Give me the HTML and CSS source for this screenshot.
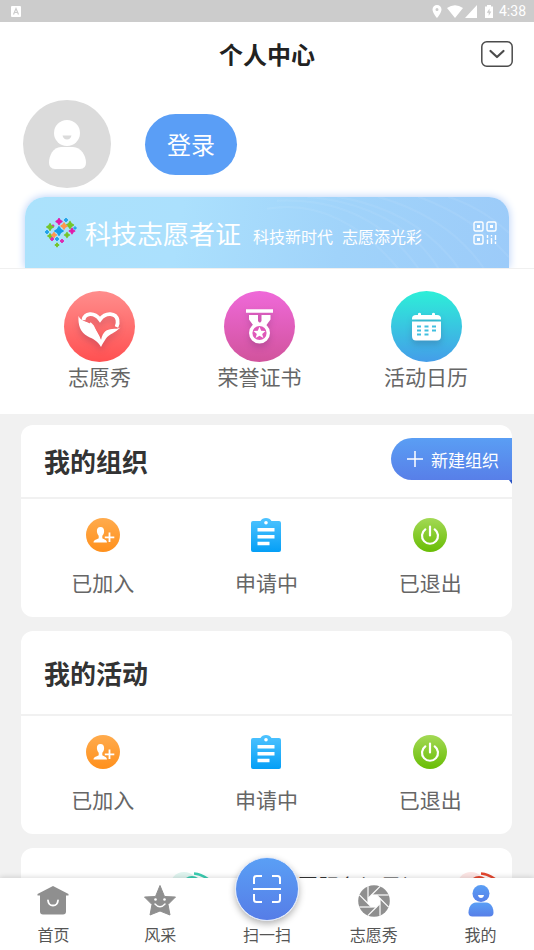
FILE: index.html
```html
<!DOCTYPE html>
<html lang="zh-CN">
<head>
<meta charset="utf-8">
<meta name="viewport" content="width=device-width, initial-scale=1">
<title>个人中心</title>
<link rel="stylesheet" href="styles.css">
</head>
<body>
<svg class="defs" aria-hidden="true">
  <defs>
    <linearGradient id="gOrange" x1="0" y1="0" x2="0" y2="1"><stop offset="0" stop-color="#ffab4d"/><stop offset="1" stop-color="#ff901c"/></linearGradient>
    <linearGradient id="gBlue" x1="0" y1="0" x2="0" y2="1"><stop offset="0" stop-color="#4fc3ff"/><stop offset="1" stop-color="#059ff6"/></linearGradient>
    <linearGradient id="gGreen" x1="0" y1="0" x2="0" y2="1"><stop offset="0" stop-color="#a3d955"/><stop offset="1" stop-color="#69bd05"/></linearGradient>
    <linearGradient id="gUser" x1="0" y1="0" x2="0" y2="1"><stop offset="0" stop-color="#5a9ff5"/><stop offset="1" stop-color="#577fe8"/></linearGradient>
    <path id="spark" d="M0-4Q.8-1.2 4 0Q.8 1.2 0 4Q-.8 1.2-4 0Q-.8-1.2 0-4Z" stroke-width="1.800" stroke-linejoin="round"/>
    <path id="blade" d="M-2.500-6H14.700" stroke="#fff" stroke-width="1.200"/>
  </defs>
  <symbol id="joined" viewBox="0 0 34 34">
    <circle cx="17" cy="17" r="17" fill="url(#gOrange)"/>
    <path d="M14.500 9C11.800 9 10.800 10.800 10.900 13.200C11 15.500 12 17 12.700 17.800V20.300C10.800 21.500 7.700 21.800 7.500 24.500H21C20.800 21.800 18.200 21.500 16.300 20.300V17.800C17.200 17 18.100 15.500 18.100 13.200C18.100 10.800 17.200 9 14.500 9Z" fill="#fff"/>
    <path d="M23.500 15V24M19 19.500H28" stroke="#fd9c36" stroke-width="4"/>
    <path d="M23.500 14.500V24M18.800 19.300H28.300" stroke="#fff" stroke-width="1.800"/>
  </symbol>
  <symbol id="pending" viewBox="0 0 34 34">
    <path d="M4 3H11.500C12.500 1 14.500 0 17 0S21.500 1 22.500 3H30Q32 3 32 5V32Q32 34 30 34H4Q2 34 2 32V5Q2 3 4 3Z" fill="url(#gBlue)"/>
    <circle cx="17" cy="4.800" r="1.800" fill="#fff"/>
    <path d="M8.500 11.800H25.500M8.500 18.700H25.500M8.500 25.500H20.500" stroke="#fff" stroke-width="3.400"/>
  </symbol>
  <symbol id="quit" viewBox="0 0 34 34">
    <circle cx="17" cy="17" r="17" fill="url(#gGreen)"/>
    <path d="M12.300 11.300A8 8 0 1 0 21.700 11.300M17 8.500V17.500" fill="none" stroke="#fff" stroke-width="2.200" stroke-linecap="round"/>
  </symbol>
</svg>

<div class="app">
  <div class="status">
    <svg width="10" height="11" viewBox="0 0 10 11"><rect width="10" height="11" rx="1" fill="#fff"/><path d="M2.500 8.500L5 2.500L7.500 8.500M3.500 6.500H6.500" fill="none" stroke="#ccc" stroke-width="1.200"/></svg>
    <div class="status-right">
      <svg width="10" height="13" viewBox="0 0 10 13"><path fill="#fff" fill-rule="evenodd" d="M5 0A4.500 4.500 0 0 0 .5 4.500C.5 8 5 13 5 13S9.500 8 9.500 4.500A4.500 4.500 0 0 0 5 0ZM5 3A1.500 1.500 0 1 0 5 6A1.500 1.500 0 0 0 5 3Z"/></svg>
      <svg class="wifi" width="32" height="13" viewBox="0 0 32 13"><path fill="#fff" d="M0 3Q8-2.500 16 3L8 13ZM30 0V13H18Z"/></svg>
      <svg width="10" height="13" viewBox="0 0 10 13"><path fill="#fff" d="M1 1.500H3V0H7V1.500H9V13H1Z"/><path fill="#ccc" d="M5.500 3.500L2.800 7.800H4.700V11L7.300 6.500H5.500Z"/></svg>
      <span class="clock">4:38</span>
    </div>
  </div>

  <main class="page">
    <header class="top">
      <h1>个人中心</h1>
      <button class="more" type="button" aria-label="更多">
        <svg width="32" height="26" viewBox="0 0 32 26" fill="none" stroke="#4b4b4b"><rect x=".8" y=".8" width="30.400" height="24.400" rx="5" stroke-width="1.500"/><path d="M9.500 10L16 16L22.500 10" stroke-width="2.200" stroke-linecap="round" stroke-linejoin="round"/></svg>
      </button>
    </header>

    <section class="profile">
      <div class="account">
        <svg class="avatar" width="88" height="88" viewBox="0 0 88 88"><circle cx="44" cy="44" r="44" fill="#dbdbdb"/><circle cx="44" cy="33" r="13" fill="#fff"/><path d="M39.500 35.500H48.500Q47.500 39.500 44 39.500T39.500 35.500Z" fill="#dbdbdb"/><path d="M38 47H50C58 47 63 56 63 62.500Q63 69 57 69H32Q26 69 26 62.500C26 56 30 47 38 47Z" fill="#fff"/></svg>
        <button class="login" type="button">登录</button>
      </div>
      <a class="pass" href="#pass">
        <svg class="rings" viewBox="0 0 240 71" preserveAspectRatio="xMaxYMid slice" fill="none" stroke="#fff" stroke-width="2"><path d="M0 12Q70 0 130 71M10 4Q100 0 150 71M40 0Q130 8 170 71M70 0Q150 14 190 71M110 0Q180 20 215 71M150 0Q205 20 240 60M180 0Q215 12 240 36"/></svg>
        <svg class="heart" width="32" height="30" viewBox="0 0 32 30">
          <g fill="#e11bab" stroke="#e11bab"><use href="#spark" transform="translate(14 3.500) scale(.75)"/><use href="#spark" transform="translate(27 13) scale(.7)"/><use href="#spark" transform="translate(7 21) scale(.5)"/><use href="#spark" transform="translate(17 23) scale(.5)"/><use href="#spark" transform="translate(8 8) scale(.35)"/></g>
          <g fill="#74c52b" stroke="#74c52b"><use href="#spark" transform="translate(5 9) scale(.8)"/><use href="#spark" transform="translate(25 7) scale(.85)"/><use href="#spark" transform="translate(5 18) scale(.6)"/><use href="#spark" transform="translate(22 17) scale(.65)"/><use href="#spark" transform="translate(12 27) scale(.55)"/></g>
          <g fill="#159ee8" stroke="#159ee8"><use href="#spark" transform="translate(14 13)"/><use href="#spark" transform="translate(21 2) scale(.5)"/><use href="#spark" transform="translate(2 14) scale(.5)"/><use href="#spark" transform="translate(12 21) scale(.5)"/><use href="#spark" transform="translate(30 10) scale(.4)"/></g>
          <g fill="#ff9650" stroke="#ff9650"><use href="#spark" transform="translate(19 8) scale(.75)"/><use href="#spark" transform="translate(9 17) scale(.65)"/></g>
        </svg>
        <strong>科技志愿者证</strong>
        <span class="slogan"><span>科技新时代</span><span>志愿添光彩</span></span>
        <svg class="qr" width="24" height="24" viewBox="0 0 24 24" fill="none" stroke="#fff" stroke-width="1.400"><rect x="1" y="1" width="9" height="9" rx="1.500"/><rect x="14" y="1" width="9" height="9" rx="1.500"/><rect x="1" y="14" width="9" height="9" rx="1.500"/><path d="M4 5.500H7M17 5.500H20M4 18.500H7" stroke-width="3"/><path d="M14.500 14V17M14.500 18.500V23M18.500 14V15.500M18.500 17V23M22.500 14V19M22.500 20.500V23"/></svg>
      </a>
    </section>

    <nav class="quick" aria-label="快捷入口">
      <a href="#show">
        <span class="disc red"><svg width="71" height="71" viewBox="0 0 71 71"><path d="M19.500 29C20.500 22 30 20.500 36 28.500C42 20.500 52 22 53.500 29C54 31.500 53.500 34 52.500 36" fill="none" stroke="#fff" stroke-width="3.800"/><path d="M14.500 25C17 31 25 30 29 35C32 39 35.500 44 37 49C39 40 43 38.500 48 38C51.500 37.600 54 38 56.500 36.500C51 42 45 43 42 47.500C40 50.500 38.500 53 37 56C34 50 29 48 24 45.500C16 41 14 34 14.500 25Z" fill="#fff"/><path d="M26 32L29 35L36.500 51" fill="none" stroke="#fff" stroke-width="2"/></svg></span>
        志愿秀
      </a>
      <a href="#honor">
        <span class="disc pink"><svg width="71" height="71" viewBox="0 0 71 71"><path d="M22 18.300H49V21.700H22ZM25 24H34V30L37 34H29L25 28.500ZM37.500 24H46.500V28.500L42.500 34H34.500L37.500 30Z" fill="#fff"/><circle cx="35.500" cy="42" r="8.800" fill="#df58b9" stroke="#fff" stroke-width="3.400"/><path d="M35.500 35.800L37.200 39.800L41.500 40.100L38.200 42.900L39.300 47.100L35.500 44.800L31.700 47.100L32.800 42.900L29.500 40.100L33.800 39.800Z" fill="#fff"/></svg></span>
        荣誉证书
      </a>
      <a href="#calendar">
        <span class="disc cyan"><svg width="71" height="71" viewBox="0 0 71 71"><path d="M25 24H27V22.500Q28.500 21 30 22.500V24H41V22.500Q42.500 21 44 22.500V24H46Q50 24 50 27.500V28.500H21V27.500Q21 24 25 24ZM21 30.500H50V45Q50 49.500 46 49.500H25Q21 49.500 21 45Z" fill="#fff"/><path d="M26 35.500H30M33.500 35.500H37.500M41 35.500H45M26 39.500H30M33.500 39.500H37.500M41 39.500H45M26 43.500H30M33.500 43.500H37.500" stroke="#40bfdf" stroke-width="2"/></svg></span>
        活动日历
      </a>
    </nav>

    <div class="cards">
      <section class="card">
        <div class="card-head">
          <h2>我的组织</h2>
          <button class="create" type="button"><svg width="16" height="16" viewBox="0 0 16 16"><path d="M8 0V16M0 8H16" stroke="#fff" stroke-width="1.500"/></svg>新建组织</button>
        </div>
        <div class="states">
          <a href="#org-joined"><svg><use href="#joined"/></svg>已加入</a>
          <a href="#org-pending"><svg><use href="#pending"/></svg>申请中</a>
          <a href="#org-quit"><svg><use href="#quit"/></svg>已退出</a>
        </div>
      </section>

      <section class="card">
        <div class="card-head tall"><h2>我的活动</h2></div>
        <div class="states">
          <a href="#act-joined"><svg><use href="#joined"/></svg>已加入</a>
          <a href="#act-pending"><svg><use href="#pending"/></svg>申请中</a>
          <a href="#act-quit"><svg><use href="#quit"/></svg>已退出</a>
        </div>
      </section>

      <section class="card records">
        <svg width="40" height="40" viewBox="0 0 40 40"><circle cx="13" cy="14" r="14" fill="#e0f5f0"/><path d="M23 1.500Q30 2 37 7" fill="none" stroke="#3bccb1" stroke-width="2.500"/><circle cx="21" cy="14" r="10" fill="#3bccb1"/></svg>
        <span>志愿服务记录证</span>
        <svg width="40" height="40" viewBox="0 0 40 40"><circle cx="13" cy="14" r="14" fill="#fde6e5"/><path d="M23 1.500Q30 2 37 7" fill="none" stroke="#e4472f" stroke-width="2.500"/><circle cx="21" cy="14" r="10" fill="#e4472f"/></svg>
      </section>
    </div>
  </main>

  <nav class="tabs" aria-label="主导航">
    <a href="#home"><svg viewBox="0 0 32 32"><path d="M16 1L31.500 9V10.500H29V26.500Q29 29.500 26 29.500H6Q3 29.500 3 26.500V10.500H.5V9Z" fill="#8f8f8f"/><path d="M11 15.500Q11.500 20.500 16 20.500T21 15.500" fill="none" stroke="#fff" stroke-width="1.800" stroke-linecap="round"/></svg>首页</a>
    <a href="#style"><svg viewBox="0 0 32 32"><path d="M16 .5L20.500 11.500L31.500 12L24 19.500L26 30L16 26L6 30L8 19.500L.5 12L11.500 11.500Z" fill="#8f8f8f" stroke="#8f8f8f" stroke-linejoin="round"/><circle cx="11.500" cy="14.500" r="1.300" fill="#fff"/><circle cx="20.500" cy="14.500" r="1.300" fill="#fff"/><path d="M11 19Q16 24.500 21 19" fill="none" stroke="#fff" stroke-width="1.500" stroke-linecap="round"/></svg>风采</a>
    <a href="#scan" class="scan"><span class="scan-btn"><svg width="28" height="28" viewBox="0 0 28 28" fill="none" stroke="#fff" stroke-width="2"><path d="M1 9V3.500Q1 1 3.500 1H9M19 1H24.500Q27 1 27 3.500V9M27 19V24.500Q27 27 24.500 27H19M9 27H3.500Q1 27 1 24.500V19M0 14H28"/></svg></span>扫一扫</a>
    <a href="#gallery"><svg viewBox="0 0 32 32"><circle cx="16" cy="16" r="15.800" fill="#8f8f8f"/><path d="M13.500 10H18.500L22 13.500V18.500L18.500 22H13.500L10 18.500V13.500Z" fill="#fff"/><g transform="translate(16 16)"><use href="#blade"/><use href="#blade" transform="rotate(45)"/><use href="#blade" transform="rotate(90)"/><use href="#blade" transform="rotate(135)"/><use href="#blade" transform="rotate(180)"/><use href="#blade" transform="rotate(225)"/><use href="#blade" transform="rotate(270)"/><use href="#blade" transform="rotate(315)"/></g></svg>志愿秀</a>
    <a href="#me" aria-current="page"><svg viewBox="0 0 32 32"><circle cx="16" cy="8.500" r="8.500" fill="url(#gUser)"/><path d="M13 10H19Q18.500 13 16 13T13 10Z" fill="#fff"/><path d="M11 17.500H21C26 17.500 28.500 23 28.500 27.500Q28.500 31.500 24.500 31.500H7.500Q3.500 31.500 3.500 27.500C3.500 23 6 17.500 11 17.500Z" fill="url(#gUser)"/></svg>我的</a>
  </nav>
</div>
</body>
</html>
```

FILE: styles.css
```css
* { box-sizing: border-box; }

body {
  margin: 0;
  font-family: "Noto Sans CJK SC", "Noto Sans", sans-serif;
  color: #333;
  background: #f1f1f1;
}

a { color: inherit; text-decoration: none; }
button { border: 0; padding: 0; font: inherit; cursor: pointer; }
svg { display: block; flex: none; }
h1, h2 { margin: 0; }
.defs { position: absolute; width: 0; height: 0; }

.app {
  display: flex;
  flex-direction: column;
  height: 100vh;
}

.status {
  flex: none;
  display: flex;
  align-items: center;
  justify-content: space-between;
  height: 22px;
  padding: 0 8px 0 11px;
  background: #ccc;
}
.status-right { display: flex; align-items: center; gap: 5px; }
.clock {
  font: 400 14px/22px Roboto, sans-serif;
  color: #fff;
}

.page {
  flex: 1;
  min-height: 0;
  overflow-y: auto;
  scrollbar-width: none;
}

.top {
  display: grid;
  grid-template-columns: 1fr auto 1fr;
  align-items: center;
  height: 64px;
  padding: 0 21px;
  background: #fff;
}
.top h1 {
  grid-column: 2;
  font-size: 24px;
  line-height: 36px;
  font-weight: 700;
  color: #222;
}
.more { justify-self: end; background: none; }

.profile {
  padding: 14px 25px 0 23px;
  background: #fff;
  border-bottom: 1px solid #f0f0f0;
  overflow: hidden;
}
.account {
  display: flex;
  align-items: center;
  gap: 34px;
}
.login {
  width: 92px;
  height: 61px;
  padding-bottom: 2px;
  border-radius: 31px;
  background: #5a9ef6;
  color: #fff;
  font-size: 24px;
}

.pass {
  position: relative;
  display: flex;
  align-items: center;
  height: 71px;
  margin: 9px 0 0 2px;
  padding: 0 12px 0 20px;
  border-radius: 20px 20px 0 0;
  background: linear-gradient(100deg, #abe2fc 0%, #abe0fd 32%, #a0d3fa 65%, #9ccbf9 100%);
  box-shadow: 0 0 8px #b4cdf7;
  color: #fff;
}
.rings {
  position: absolute;
  top: 0;
  right: 0;
  width: 50%;
  height: 100%;
  opacity: .06;
}
.pass strong {
  margin-left: 8px;
  font-size: 26px;
  line-height: 38px;
  font-weight: 400;
}
.slogan {
  display: flex;
  gap: 9px;
  margin: 6px 0 0 12px;
  font-size: 16px;
  line-height: 24px;
}
.qr { margin-left: auto; }

.quick {
  display: flex;
  justify-content: space-between;
  padding: 22px 66px 24px 64px;
  background: #fff;
}
.quick a {
  display: flex;
  flex-direction: column;
  align-items: center;
  font-size: 21px;
  line-height: 28px;
  color: #666;
}
.disc { border-radius: 50%; }
.disc svg { filter: drop-shadow(0 4px 3px rgba(60, 30, 80, .2)); }
.red { background: linear-gradient(#ff8d8c, #ff5051); }
.pink { background: linear-gradient(#ef69d9, #d1539c); }
.cyan { background: linear-gradient(#2defd8, #449de9); }

.cards {
  display: flex;
  flex-direction: column;
  gap: 14px;
  padding: 11px 22px 14px 21px;
}
.card {
  border-radius: 12px;
  background: #fff;
}
.card-head {
  display: flex;
  align-items: center;
  justify-content: space-between;
  height: 74px;
  padding-left: 23px;
  border-bottom: 2px solid #f1f1f1;
}
.tall { height: 85px; }
.card-head h2 {
  font-size: 26px;
  line-height: 38px;
  font-weight: 700;
}
.create {
  position: relative;
  display: flex;
  align-items: center;
  gap: 8px;
  height: 42px;
  margin-bottom: 4px;
  padding: 0 13px 0 16px;
  border-radius: 21px 0 0 21px;
  background: linear-gradient(#5a9ef4, #587fe8);
  color: #fff;
  font-size: 17px;
}
.create::after {
  content: "";
  position: absolute;
  top: 100%;
  right: 0;
  border-top: 4px solid #2a54c4;
  border-left: 3px solid transparent;
}

.states {
  display: grid;
  grid-template-columns: repeat(3, 1fr);
  padding: 19px 0 20px;
}
.states a {
  display: flex;
  flex-direction: column;
  align-items: center;
  gap: 15px;
  font-size: 21px;
  line-height: 30px;
  color: #666;
}
.states svg { width: 34px; height: 34px; }

.records {
  display: flex;
  align-items: center;
  justify-content: space-between;
  padding: 24px 14px 24px 150px;
  font-size: 21px;
  line-height: 40px;
}
.records span { margin-top: -14px; padding-left: 30px; }

.tabs {
  position: relative;
  flex: none;
  display: grid;
  grid-template-columns: repeat(5, 1fr);
  grid-template-rows: minmax(0, 1fr);
  height: 72px;
  padding-top: 7px;
  background: #fff;
  box-shadow: 0 -1px 5px rgba(0, 0, 0, .14);
}
.tabs a {
  display: flex;
  flex-direction: column;
  align-items: center;
  gap: 5px;
  font-size: 16px;
  line-height: 24px;
  color: #555;
}
.tabs a > svg { width: 32px; height: 32px; }
.tabs .scan {
  justify-content: flex-end;
  gap: 1px;
  min-height: 0;
  padding-bottom: 4px;
}
.scan-btn {
  flex: none;
  display: grid;
  place-items: center;
  width: 64px;
  height: 64px;
  border: 1px solid #dfe8fa;
  border-radius: 50%;
  background: linear-gradient(#5a9ff5, #567de7);
  box-shadow: 0 3px 7px rgba(0, 0, 0, .3);
}
```
